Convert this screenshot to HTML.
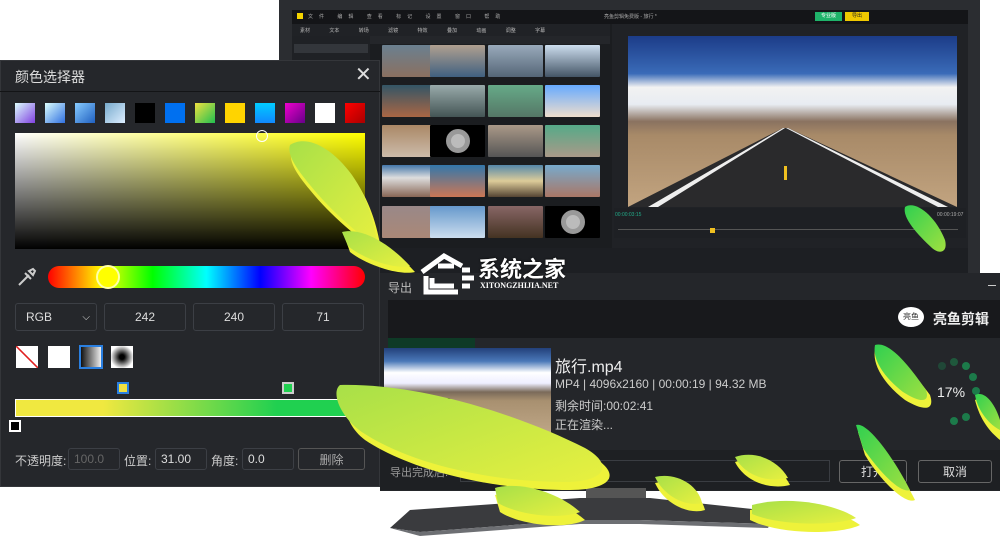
<!DOCTYPE html>
<html><head><meta charset="utf-8"><style>
*{margin:0;padding:0;box-sizing:border-box}
body{width:1000px;height:540px;overflow:hidden;background:#fff;position:relative;font-family:"Liberation Sans","Noto Sans CJK SC",sans-serif;color:#ddd}
.a{position:absolute}
.th{position:absolute;width:55px;height:32px;border-radius:1px}
.inp{position:absolute;border:1px solid #3c3f45;border-radius:3px;font-size:12px;color:#ddd;display:flex;align-items:center;justify-content:center}
</style></head><body>
<div class="a" style="left:279px;top:0;width:701px;height:283px;background:#2b2d31"></div>
<div class="a" style="left:292px;top:10px;width:676px;height:272px;background:#1b1d20"></div>
<div class="a" style="left:292px;top:10px;width:676px;height:14px;background:#141518"></div>
<div class="a" style="left:297px;top:13px;width:6px;height:6px;background:#f5d400"></div>
<div class="a" style="left:308px;top:13px;font-size:5px;color:#aaa;letter-spacing:6px">文件 编辑 查看 标记 设置 窗口 帮助</div>
<div class="a" style="left:604px;top:13px;font-size:5px;color:#aaa">亮鱼剪辑免费版 - 旅行 *</div>
<div class="a" style="left:815px;top:12px;width:27px;height:9px;background:#1fb36a;font-size:5px;color:#fff;text-align:center">专业版</div>
<div class="a" style="left:845px;top:12px;width:24px;height:9px;background:#f0c800;font-size:5px;color:#222;text-align:center">导出</div>
<div class="a" style="left:292px;top:24px;width:318px;height:12px;background:#202226;font-size:5px;color:#bbb;padding:3px 8px;word-spacing:18px">素材 文本 转场 滤镜 特效 叠加 动画 调整 字幕</div>
<div class="a" style="left:292px;top:36px;width:78px;height:246px;background:#1f2125"></div>
<div class="a" style="left:294px;top:44px;width:74px;height:9px;background:#33363b"></div>
<div class="a" style="left:370px;top:36px;width:240px;height:8px;background:#24262a"></div>
<div class="a" style="left:612px;top:24px;width:356px;height:258px;background:#202226"></div>
<div class="a" style="left:628px;top:36px;width:329px;height:171px;background:linear-gradient(#1c3c88 0%,#3a6bb8 22%,#f2f2f2 30%,#e8ecf2 40%,#8a7260 50%,#a88a68 58%,#c2a480 100%)"></div>
<svg class="a" style="left:628px;top:36px" width="329" height="171"><polygon points="155,92 160,92 329,171 0,171" fill="#2a2a2c"/><polygon points="155,92 157,92 30,171 20,171" fill="#eee"/><polygon points="158,92 160,92 320,171 310,171" fill="#eee"/><rect x="156" y="130" width="3" height="14" fill="#f0c020"/></svg>
<div class="a" style="left:614px;top:208px;width:352px;height:30px;background:#1e2024"></div>
<div class="a" style="left:618px;top:229px;width:340px;height:1px;background:#555"></div>
<div class="a" style="left:710px;top:228px;width:5px;height:5px;background:#f0c020"></div>
<div class="a" style="left:615px;top:212px;font-size:5px;color:#2a8">00:00:03:15</div>
<div class="a" style="left:937px;top:212px;font-size:5px;color:#aaa">00:00:19:07</div>
<div class="a" style="left:292px;top:248px;width:676px;height:34px;background:#1d1f23"></div>
<div class="th" style="left:382px;top:45px;background:linear-gradient(#6a8090,#8a7060)"></div>
<div class="th" style="left:430px;top:45px;background:linear-gradient(#b0a090,#406080)"></div>
<div class="th" style="left:488px;top:45px;background:linear-gradient(#9ab,#567)"></div>
<div class="th" style="left:545px;top:45px;background:linear-gradient(#cde,#456)"></div>
<div class="th" style="left:382px;top:85px;background:linear-gradient(#356,#a64)"></div>
<div class="th" style="left:430px;top:85px;background:linear-gradient(#9aa,#455)"></div>
<div class="th" style="left:488px;top:85px;background:linear-gradient(#6a8,#576)"></div>
<div class="th" style="left:545px;top:85px;background:linear-gradient(#6af,#edc)"></div>
<div class="th" style="left:382px;top:125px;background:linear-gradient(#a86,#cba)"></div>
<div class="th" style="left:430px;top:125px;background:#000"><div style="margin:4px auto;width:24px;height:24px;border-radius:50%;background:#bbb;border:5px solid #999"></div></div>
<div class="th" style="left:488px;top:125px;background:linear-gradient(#a98,#555)"></div>
<div class="th" style="left:545px;top:125px;background:linear-gradient(#5a8,#a98)"></div>
<div class="th" style="left:382px;top:165px;background:linear-gradient(#47a,#ddd 40%,#865)"></div>
<div class="th" style="left:430px;top:165px;background:linear-gradient(#37a,#c75)"></div>
<div class="th" style="left:488px;top:165px;background:linear-gradient(#58a,#dc9 50%,#543)"></div>
<div class="th" style="left:545px;top:165px;background:linear-gradient(#7ac,#a76)"></div>
<div class="th" style="left:382px;top:206px;background:linear-gradient(#988,#a87)"></div>
<div class="th" style="left:430px;top:206px;background:linear-gradient(#69c,#cde)"></div>
<div class="th" style="left:488px;top:206px;background:linear-gradient(#866,#432)"></div>
<div class="th" style="left:545px;top:206px;background:#000"><div style="margin:4px auto;width:24px;height:24px;border-radius:50%;background:#bbb;border:5px solid #999"></div></div>

<div class="a" style="left:380px;top:273px;width:620px;height:218px;background:#24262a"></div>
<div class="a" style="left:388px;top:279px;font-size:12px;color:#bbb">导出</div>
<div class="a" style="left:988px;top:285px;width:8px;height:1px;background:#ccc"></div>
<div class="a" style="left:388px;top:300px;width:612px;height:38px;background:#18191c"></div>
<div class="a" style="left:898px;top:307px;width:26px;height:20px;border-radius:50%;background:#fff;font-size:8px;color:#333;text-align:center;line-height:20px">亮鱼</div>
<div class="a" style="left:933px;top:309px;font-size:14px;color:#eee;font-weight:bold">亮鱼剪辑</div>
<div class="a" style="left:388px;top:338px;width:87px;height:10px;background:#0e3a26"></div>
<div class="a" style="left:384px;top:348px;width:167px;height:88px;background:linear-gradient(#23407a 0%,#4a78b8 15%,#fff 28%,#eef 40%,#7a6a5a 50%,#a89070 60%,#c0a888 100%)"></div>
<svg class="a" style="left:384px;top:348px" width="167" height="88"><polygon points="60,50 65,50 130,88 10,88" fill="#222"/></svg>
<div class="a" style="left:555px;top:353px;font-size:16px;color:#eee">旅行.mp4</div>
<div class="a" style="left:555px;top:377px;font-size:12px;color:#ccc">MP4 | 4096x2160 | 00:00:19 | 94.32 MB</div>
<div class="a" style="left:555px;top:397px;font-size:12px;color:#ccc">剩余时间:00:02:41</div>
<div class="a" style="left:555px;top:416px;font-size:12px;color:#ccc">正在渲染...</div>
<div class="a" style="left:937px;top:384px;font-size:14px;color:#eee">17%</div>
<svg class="a" style="left:925px;top:350px" width="70" height="80"><g fill="#1c7a4a"><circle cx="17" cy="16" r="4" opacity=".4"/><circle cx="29" cy="12" r="4" opacity=".6"/><circle cx="41" cy="16" r="4"/><circle cx="48" cy="27" r="4"/><circle cx="51" cy="41" r="4"/><circle cx="41" cy="67" r="4"/><circle cx="29" cy="71" r="4"/></g></svg>
<div class="a" style="left:380px;top:450px;width:620px;height:40px;background:#1e2023"></div>
<div class="a" style="left:390px;top:464px;font-size:11px;color:#999">导出完成后:</div>
<div class="a" style="left:460px;top:460px;width:370px;height:22px;border:1px solid #3a3d42"></div>
<div class="inp" style="left:839px;top:460px;width:68px;height:23px;border-color:#666">打开</div>
<div class="inp" style="left:918px;top:460px;width:74px;height:23px;border-color:#666">取消</div>

<svg class="a" style="left:380px;top:488px" width="420" height="52"><rect x="206" y="0" width="60" height="12" fill="#555"/><path d="M30,22 L200,10 L270,10 L400,24 L390,36 L260,32 L200,32 L40,44 L10,40 Z" fill="#3a3b3e"/><path d="M10,40 L40,44 L200,32 L260,32 L390,36 L388,40 L260,36 L200,36 L40,48 Z" fill="#6d6f73"/></svg>

<svg class="a" style="left:418px;top:252px" width="60" height="44"><path d="M4,20 L26,4 L44,14 M8,24 L8,40 L40,40 M14,26 L14,34 L36,34 M20,14 L36,14 M44,18 L52,18 M44,26 L56,26 M44,34 L52,34" stroke="#fff" stroke-width="5" fill="none"/></svg>
<div class="a" style="left:478px;top:252px;font-size:22px;font-weight:bold;color:#fff;text-shadow:0 0 2px #000">系统之家</div>
<div class="a" style="left:480px;top:281px;font-size:8px;font-family:'Liberation Serif',serif;color:#fff;font-weight:bold">XITONGZHIJIA.NET</div>

<div class="a" style="left:0;top:60px;width:380px;height:427px;background:#25272b;border:1px solid #34363a"></div>
<div class="a" style="left:0;top:91px;width:380px;height:1px;background:#131416"></div>
<div class="a" style="left:15px;top:67px;font-size:14px;color:#ddd">颜色选择器</div>
<div class="a" style="left:355px;top:62px;font-size:20px;color:#ddd">✕</div>
<div class="a" style="left:15px;top:103px;width:20px;height:20px;background:linear-gradient(135deg,#dff,#8040e0)"></div>
<div class="a" style="left:45px;top:103px;width:20px;height:20px;background:linear-gradient(135deg,#dff,#3070e0)"></div>
<div class="a" style="left:75px;top:103px;width:20px;height:20px;background:linear-gradient(135deg,#8cf,#2060c0)"></div>
<div class="a" style="left:105px;top:103px;width:20px;height:20px;background:linear-gradient(135deg,#7ac,#def)"></div>
<div class="a" style="left:135px;top:103px;width:20px;height:20px;background:#000"></div>
<div class="a" style="left:165px;top:103px;width:20px;height:20px;background:#0070f0"></div>
<div class="a" style="left:195px;top:103px;width:20px;height:20px;background:linear-gradient(135deg,#f0e040,#20c050)"></div>
<div class="a" style="left:225px;top:103px;width:20px;height:20px;background:#ffd400"></div>
<div class="a" style="left:255px;top:103px;width:20px;height:20px;background:linear-gradient(#0cf,#18f)"></div>
<div class="a" style="left:285px;top:103px;width:20px;height:20px;background:linear-gradient(135deg,#e0c,#608)"></div>
<div class="a" style="left:315px;top:103px;width:20px;height:20px;background:#fff"></div>
<div class="a" style="left:345px;top:103px;width:20px;height:20px;background:linear-gradient(135deg,#f00,#a00)"></div>
<div class="a" style="left:15px;top:133px;width:350px;height:116px;background:linear-gradient(to top,#000,transparent),linear-gradient(to right,#fff,#ff0)"></div>
<div class="a" style="left:256px;top:130px;width:12px;height:12px;border-radius:50%;border:1.5px solid #fff"></div>
<svg class="a" style="left:16px;top:266px" width="22" height="22"><path d="M3,19 L13,9 M9,7 L15,13 M13,5 L17,3 L19,5 L17,9 Z" stroke="#ccc" stroke-width="2" fill="none"/></svg>
<div class="a" style="left:48px;top:266px;width:317px;height:22px;border-radius:11px;background:linear-gradient(to right,#f00,#ff0 17%,#0f0 33%,#0ff 50%,#00f 67%,#f0f 83%,#f00)"></div>
<div class="a" style="left:96px;top:265px;width:24px;height:24px;border-radius:50%;background:#ff0;border:2px solid #ffa"></div>
<div class="inp" style="left:15px;top:303px;width:82px;height:28px;justify-content:flex-start;padding-left:10px">RGB<span style="position:absolute;right:6px;font-size:10px">⌵</span></div>
<div class="inp" style="left:104px;top:303px;width:82px;height:28px">242</div>
<div class="inp" style="left:193px;top:303px;width:82px;height:28px">240</div>
<div class="inp" style="left:282px;top:303px;width:82px;height:28px">71</div>
<div class="a" style="left:16px;top:346px;width:22px;height:22px;background:linear-gradient(to top right,#fff 47%,#e02020 48%,#e02020 52%,#fff 53%)"></div>
<div class="a" style="left:48px;top:346px;width:22px;height:22px;background:#fff"></div>
<div class="a" style="left:79px;top:345px;width:24px;height:24px;border:2px solid #2a7fe0;background:linear-gradient(to right,#111,#eee)"></div>
<div class="a" style="left:111px;top:346px;width:22px;height:22px;background:radial-gradient(#000 15%,#fff 75%)"></div>
<div class="a" style="left:117px;top:382px;width:12px;height:12px;border:2px solid #2a7fe0;background:#f0e040"></div>
<div class="a" style="left:282px;top:382px;width:12px;height:12px;border:2px solid #ccc;background:#20d050"></div>
<div class="a" style="left:15px;top:399px;width:350px;height:18px;border:1px solid #fff;background:linear-gradient(to right,#f0e840 25%,#20d050 75%)"></div>
<div class="a" style="left:9px;top:420px;width:12px;height:12px;border:2px solid #fff;background:#000"></div>
<div class="a" style="left:15px;top:452px;font-size:12px;color:#ccc">不透明度:</div>
<div class="inp" style="left:68px;top:448px;width:52px;height:22px;color:#666;justify-content:flex-start;padding-left:5px">100.0</div>
<div class="a" style="left:124px;top:452px;font-size:12px;color:#ccc">位置:</div>
<div class="inp" style="left:155px;top:448px;width:52px;height:22px;justify-content:flex-start;padding-left:5px">31.00</div>
<div class="a" style="left:211px;top:452px;font-size:12px;color:#ccc">角度:</div>
<div class="inp" style="left:242px;top:448px;width:52px;height:22px;justify-content:flex-start;padding-left:5px">0.0</div>
<div class="inp" style="left:298px;top:448px;width:67px;height:22px;border-color:#555;color:#aaa">删除</div>

<svg class="a" style="left:0;top:0" width="1000" height="540">
<defs>
<linearGradient id="g1" x1="0" y1="0" x2="1" y2="1"><stop offset="0" stop-color="#a8e048"/><stop offset="1" stop-color="#e8f040"/></linearGradient>
<linearGradient id="g2" x1="0" y1="0" x2="1" y2="1"><stop offset="0" stop-color="#30d050"/><stop offset="1" stop-color="#a0e040"/></linearGradient>
</defs>
<g fill="#eef23a">
<path d="M292,150 C305,140 330,150 355,180 C372,205 378,230 382,255 C360,240 330,215 310,190 C295,172 288,160 292,150Z"/>
<path d="M345,238 C365,232 395,250 415,272 C398,276 365,264 350,252Z"/>
<path d="M352,392 C420,390 520,420 590,455 C625,475 610,490 570,490 C490,490 410,470 365,440 C345,425 340,400 352,392Z"/>
<path d="M495,495 C520,488 560,498 585,520 C565,530 520,525 500,512Z"/>
<path d="M735,462 C755,455 780,465 790,485 C770,490 745,482 735,462Z"/>
<path d="M655,483 C675,478 700,490 705,510 C690,515 665,505 655,483Z"/>
<path d="M750,510 C790,500 840,510 860,525 C840,535 780,535 750,520Z"/>
<path d="M875,350 C890,345 915,375 930,395 C935,410 925,412 905,400 C885,385 872,365 875,350Z"/>
<path d="M858,432 C870,428 900,470 915,500 C905,505 880,480 865,455Z"/>
<path d="M975,400 C985,395 995,410 1000,430 L1000,440 C990,432 980,420 975,400Z"/>
</g>
<g fill="url(#g1)">
<path d="M290,145 C305,135 330,145 352,175 C368,198 374,222 378,248 C358,234 330,210 310,185 C296,168 287,155 290,145Z"/>
<path d="M342,232 C362,227 390,244 410,266 C394,270 362,258 348,246Z"/>
<path d="M340,385 C420,383 520,415 585,448 C615,465 605,482 565,482 C490,482 412,464 365,434 C342,420 330,393 340,385Z"/>
<path d="M495,488 C520,481 558,492 580,512 C560,520 518,515 498,503Z"/>
<path d="M735,457 C755,450 778,460 788,478 C768,483 745,476 735,457Z"/>
<path d="M655,477 C675,472 698,484 702,503 C688,507 665,498 655,477Z"/>
<path d="M752,505 C790,495 838,505 856,518 C836,526 780,526 752,514Z"/>
</g>
<g fill="url(#g2)">
<path d="M875,345 C890,340 912,370 926,390 C930,402 922,404 903,392 C885,378 872,360 875,345Z"/>
<path d="M856,425 C868,421 896,462 910,490 C900,494 878,470 863,448Z"/>
<path d="M905,207 C915,200 935,215 945,240 C948,252 940,255 932,248 C918,235 902,218 905,207Z"/>
<path d="M975,395 C985,390 995,404 1000,420 L1000,430 C990,425 978,412 975,395Z"/>
</g>
</svg>
</body></html>
